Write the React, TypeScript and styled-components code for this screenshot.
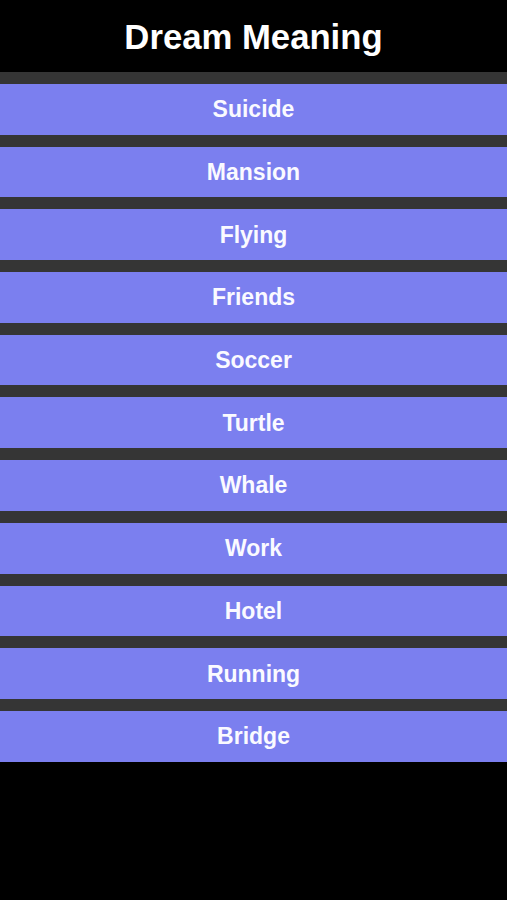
import * as React from 'react'
import styled, { createGlobalStyle } from 'styled-components'

const GlobalStyle = createGlobalStyle`
  html, body {
    margin: 0;
    padding: 0;
    background: #000;
  }
`

const Page = styled.div`
  width: 100%;
  min-height: 900px;
  background: #000;
`

const Header = styled.header`
  height: 72px;
  padding-top: 2px;
  box-sizing: border-box;
  display: flex;
  align-items: center;
  justify-content: center;
  color: #fff;
  font-family: 'Liberation Sans', Arial, sans-serif;
  font-weight: bold;
  font-size: 34.7px;
`

const List = styled.ul`
  list-style: none;
  margin: 0;
  padding: 0;
`

const Item = styled.li`
  background: #353535;
  padding-top: 12px;
`

const Topic = styled.a`
  display: flex;
  align-items: center;
  justify-content: center;
  height: 50.7px;
  padding-top: 1px;
  box-sizing: border-box;
  background: #7b7fef;
  color: #fafaff;
  font-family: 'Liberation Sans', Arial, sans-serif;
  font-weight: bold;
  font-size: 23px;
  text-decoration: none;
  cursor: pointer;
`

const topics = [
  'Suicide',
  'Mansion',
  'Flying',
  'Friends',
  'Soccer',
  'Turtle',
  'Whale',
  'Work',
  'Hotel',
  'Running',
  'Bridge',
]

export default function App() {
  return (
    <Page>
      <GlobalStyle />
      <Header>Dream Meaning</Header>
      <List>
        {topics.map((t) => (
          <Item key={t}>
            <Topic>{t}</Topic>
          </Item>
        ))}
      </List>
    </Page>
  )
}
